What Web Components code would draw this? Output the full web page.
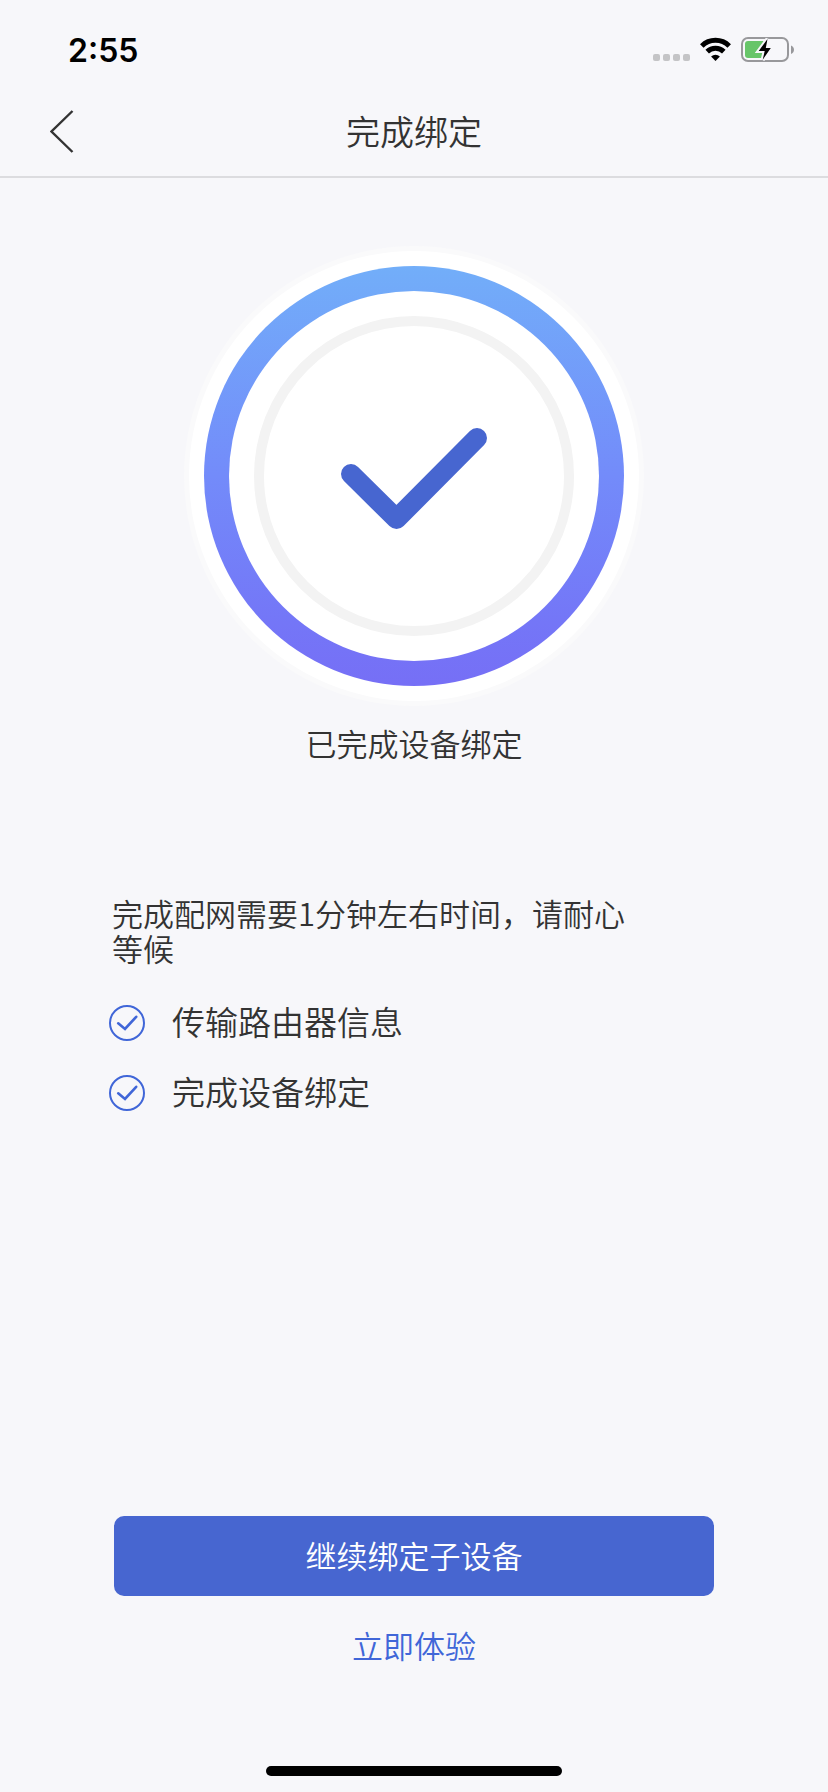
<!DOCTYPE html>
<html lang="zh-CN">
<head>
<meta charset="utf-8">
<meta name="viewport" content="width=device-width, initial-scale=1">
<title>完成绑定</title>
<style>
  body {
    margin: 0;
    background: #f7f7fa;
    color: #333;
    font-family: "Noto Sans CJK SC", sans-serif;
    --accent: #4766d0;
    --link: #4066d8;
  }
</style>
</head>
<body>
<bind-page>
  <status-bar slot="top" time="2:55"></status-bar>
  <nav-bar slot="top">完成绑定</nav-bar>
  <success-badge>已完成设备绑定</success-badge>
  <step-list>
    <span slot="intro">完成配网需要1分钟左右时间，请耐心等候</span>
    <step-item>传输路由器信息</step-item>
    <step-item>完成设备绑定</step-item>
  </step-list>
  <action-group slot="bottom">
    <span slot="primary">继续绑定子设备</span>
    <span slot="secondary">立即体验</span>
  </action-group>
  <home-indicator slot="bottom"></home-indicator>
</bind-page>

<script>
const define = (name, html, setup) => customElements.define(name, class extends HTMLElement {
  constructor() {
    super();
    this.attachShadow({ mode: "open" }).innerHTML = html;
  }
  connectedCallback() {
    if (setup) setup(this);
  }
});

define("bind-page", `
  <style>
    :host { display: flex; flex-direction: column; min-height: 100vh; }
    main { flex: 1; padding: 68px 112px 40px; }
  </style>
  <header><slot name="top"></slot></header>
  <main><slot></slot></main>
  <footer><slot name="bottom"></slot></footer>
`);

define("status-bar", `
  <style>
    :host { display: flex; align-items: center; justify-content: space-between;
      height: 88px; padding: 0 34px 0 68px; box-sizing: border-box; color: #000; }
    time { font: 600 32px/40px Inter, sans-serif; padding-top: 14px; }
    .icons { display: flex; align-items: center; gap: 10px; padding-top: 12px; }
    svg { display: block; }
  </style>
  <time></time>
  <div class="icons">
    <svg width="37" height="26" viewBox="0 0 37 26" fill="#c4c4c6" aria-hidden="true">
      <rect y="17" width="7" height="7" rx="2"/><rect x="10" y="17" width="7" height="7" rx="2"/>
      <rect x="20" y="17" width="7" height="7" rx="2"/><rect x="30" y="17" width="7" height="7" rx="2"/>
    </svg>
    <svg width="31" height="26" viewBox="0 0 31 26" aria-hidden="true">
      <g fill="none" stroke="#000" stroke-width="5">
        <path d="M1.8 8.900a19.4 19.4 0 0 1 27.400 0"/>
        <path d="M7.200 14.600a11.8 11.8 0 0 1 16.600 0"/>
      </g>
      <path d="M11.100 19.600a6.300 6.300 0 0 1 8.800 0L15.500 24z"/>
    </svg>
    <svg width="53" height="26" viewBox="0 0 53 26" aria-hidden="true">
      <rect x="1" y="1" width="46" height="23" rx="6" fill="none" stroke="#98989b" stroke-width="2"/>
      <path d="M50 8.500c4 1.500 4 7 0 8.500z" fill="#98989b"/>
      <path d="M7 4h17v17H7a3 3 0 0 1-3-3V7a3 3 0 0 1 3-3z" fill="#67c569"/>
      <path d="M26.500 2L17.700 14h6L21.700 22.800 29.800 11H24.800z" fill="#f7f7fa" stroke="#f7f7fa" stroke-width="4"/>
      <path d="M26.500 2L17.700 14h6L21.700 22.800 29.800 11H24.800z"/>
    </svg>
  </div>
`, el => { el.shadowRoot.querySelector("time").textContent = el.getAttribute("time"); });

define("nav-bar", `
  <style>
    :host { display: grid; grid-template-columns: 1fr auto 1fr; align-items: center;
      height: 88px; border-bottom: 2px solid #dcdcdf; }
    h1 { margin: 0; padding-bottom: 2px; font-size: 34px; line-height: 48px; font-weight: 350; }
    button { justify-self: start; margin: 0; padding: 0 40px 0 50px; border: 0; background: none; }
    svg { display: block; }
  </style>
  <button type="button" aria-label="返回">
    <svg width="24" height="44" viewBox="0 0 24 44" fill="none" stroke="#333" stroke-width="2.400">
      <path d="M22.500 1L1.500 21.500 22.500 42"/>
    </svg>
  </button>
  <h1><slot></slot></h1>
`);

define("success-badge", `
  <style>
    :host { display: flex; flex-direction: column; align-items: center; gap: 15px; }
    svg { display: block; width: 460px; max-width: 100%; height: auto; }
    p { margin: 0; font-size: 31px; line-height: 44px; font-weight: 350; }
  </style>
  <svg viewBox="0 0 460 460" aria-hidden="true">
    <defs>
      <linearGradient id="ring" x1="0" y1="0" x2="0" y2="1">
        <stop offset="0" stop-color="#72aef9"/>
        <stop offset=".5" stop-color="#738bfa"/>
        <stop offset=".85" stop-color="#7476f7"/>
        <stop offset="1" stop-color="#766ff6"/>
      </linearGradient>
    </defs>
    <circle cx="230" cy="230" r="230" fill="#fafafb"/>
    <circle cx="230" cy="230" r="225" fill="#fff"/>
    <circle cx="230" cy="230" r="210" fill="url(#ring)"/>
    <circle cx="230" cy="230" r="185" fill="#fff"/>
    <circle cx="230" cy="230" r="155" fill="none" stroke="#f3f3f3" stroke-width="10"/>
    <path d="M167 228L212.500 273 293 192" fill="none" stroke="#4766d0" stroke-width="20" stroke-linecap="round" stroke-linejoin="round"/>
  </svg>
  <p><slot></slot></p>
`);

define("step-list", `
  <style>
    :host { display: block; padding-top: 130px; }
    p { margin: 0 0 40px; max-width: 530px; font-size: 31px; line-height: 35px; font-weight: 350; }
    .steps { display: flex; flex-direction: column; gap: 34px; margin-left: -3px; }
  </style>
  <p><slot name="intro"></slot></p>
  <div class="steps" role="list"><slot></slot></div>
`, el => el.querySelectorAll("step-item").forEach(i => i.setAttribute("role", "listitem")));

define("step-item", `
  <style>
    :host { display: flex; align-items: center; gap: 27px;
      font-size: 33px; line-height: 32px; font-weight: 350; }
    svg { flex: none; }
    span { padding-bottom: 4px; }
  </style>
  <svg width="36" height="36" viewBox="0 0 36 36" fill="none" stroke="#4066d8" aria-hidden="true">
    <circle cx="18" cy="18" r="17" stroke-width="2"/>
    <path d="M9.200 18.300L16 24 27.200 11.800" stroke-width="2.600" stroke-linecap="round"/>
  </svg>
  <span><slot></slot></span>
`);

define("action-group", `
  <style>
    :host { display: flex; flex-direction: column; align-items: center; gap: 27px; padding: 0 114px 99px; }
    button { width: 100%; height: 80px; margin: 0; padding: 0 0 2px; border: 0; border-radius: 10px;
      background: var(--accent); color: #fff; font: 350 31px/44px "Noto Sans CJK SC", sans-serif; }
    a { color: var(--link); font-size: 31px; line-height: 44px; font-weight: 350; text-decoration: none; }
  </style>
  <button type="button"><slot name="primary"></slot></button>
  <a href="#"><slot name="secondary"></slot></a>
`);

define("home-indicator", `
  <style>
    :host { display: flex; justify-content: center; padding-bottom: 16px; }
    div { width: 296px; height: 10px; border-radius: 5px; background: #000; }
  </style>
  <div></div>
`);
</script>
</body>
</html>
